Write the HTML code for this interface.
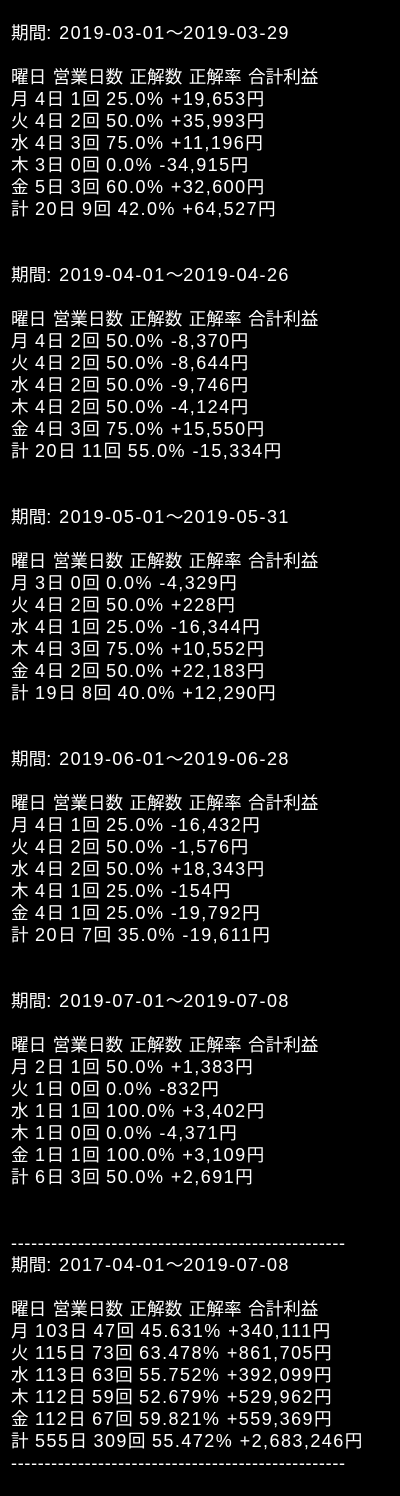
<!DOCTYPE html>
<html><head><meta charset="utf-8"><style>
html,body{margin:0;padding:0;background:#000;}
body{width:400px;height:1496px;overflow:hidden;}
pre{margin:0;padding:22px 0 0 11px;color:#fff;font-family:"Liberation Sans","Noto Sans CJK JP",sans-serif;font-size:18px;line-height:22px;letter-spacing:1.45px;white-space:pre;}
i{font-style:normal;letter-spacing:0;font-size:17.6px;}
.d{letter-spacing:0.7px;}
</style></head><body><pre><i>期間</i>: 2019-03-01<i>～</i>2019-03-29

<i>曜日</i> <i>営業日数</i> <i>正解数</i> <i>正解率</i> <i>合計利益</i>
<i>月</i> 4<i>日</i> 1<i>回</i> 25.0% +19,653<i>円</i>
<i>火</i> 4<i>日</i> 2<i>回</i> 50.0% +35,993<i>円</i>
<i>水</i> 4<i>日</i> 3<i>回</i> 75.0% +11,196<i>円</i>
<i>木</i> 3<i>日</i> 0<i>回</i> 0.0% -34,915<i>円</i>
<i>金</i> 5<i>日</i> 3<i>回</i> 60.0% +32,600<i>円</i>
<i>計</i> 20<i>日</i> 9<i>回</i> 42.0% +64,527<i>円</i>


<i>期間</i>: 2019-04-01<i>～</i>2019-04-26

<i>曜日</i> <i>営業日数</i> <i>正解数</i> <i>正解率</i> <i>合計利益</i>
<i>月</i> 4<i>日</i> 2<i>回</i> 50.0% -8,370<i>円</i>
<i>火</i> 4<i>日</i> 2<i>回</i> 50.0% -8,644<i>円</i>
<i>水</i> 4<i>日</i> 2<i>回</i> 50.0% -9,746<i>円</i>
<i>木</i> 4<i>日</i> 2<i>回</i> 50.0% -4,124<i>円</i>
<i>金</i> 4<i>日</i> 3<i>回</i> 75.0% +15,550<i>円</i>
<i>計</i> 20<i>日</i> 11<i>回</i> 55.0% -15,334<i>円</i>


<i>期間</i>: 2019-05-01<i>～</i>2019-05-31

<i>曜日</i> <i>営業日数</i> <i>正解数</i> <i>正解率</i> <i>合計利益</i>
<i>月</i> 3<i>日</i> 0<i>回</i> 0.0% -4,329<i>円</i>
<i>火</i> 4<i>日</i> 2<i>回</i> 50.0% +228<i>円</i>
<i>水</i> 4<i>日</i> 1<i>回</i> 25.0% -16,344<i>円</i>
<i>木</i> 4<i>日</i> 3<i>回</i> 75.0% +10,552<i>円</i>
<i>金</i> 4<i>日</i> 2<i>回</i> 50.0% +22,183<i>円</i>
<i>計</i> 19<i>日</i> 8<i>回</i> 40.0% +12,290<i>円</i>


<i>期間</i>: 2019-06-01<i>～</i>2019-06-28

<i>曜日</i> <i>営業日数</i> <i>正解数</i> <i>正解率</i> <i>合計利益</i>
<i>月</i> 4<i>日</i> 1<i>回</i> 25.0% -16,432<i>円</i>
<i>火</i> 4<i>日</i> 2<i>回</i> 50.0% -1,576<i>円</i>
<i>水</i> 4<i>日</i> 2<i>回</i> 50.0% +18,343<i>円</i>
<i>木</i> 4<i>日</i> 1<i>回</i> 25.0% -154<i>円</i>
<i>金</i> 4<i>日</i> 1<i>回</i> 25.0% -19,792<i>円</i>
<i>計</i> 20<i>日</i> 7<i>回</i> 35.0% -19,611<i>円</i>


<i>期間</i>: 2019-07-01<i>～</i>2019-07-08

<i>曜日</i> <i>営業日数</i> <i>正解数</i> <i>正解率</i> <i>合計利益</i>
<i>月</i> 2<i>日</i> 1<i>回</i> 50.0% +1,383<i>円</i>
<i>火</i> 1<i>日</i> 0<i>回</i> 0.0% -832<i>円</i>
<i>水</i> 1<i>日</i> 1<i>回</i> 100.0% +3,402<i>円</i>
<i>木</i> 1<i>日</i> 0<i>回</i> 0.0% -4,371<i>円</i>
<i>金</i> 1<i>日</i> 1<i>回</i> 100.0% +3,109<i>円</i>
<i>計</i> 6<i>日</i> 3<i>回</i> 50.0% +2,691<i>円</i>


<span class="d">--------------------------------------------------</span>
<i>期間</i>: 2017-04-01<i>～</i>2019-07-08

<i>曜日</i> <i>営業日数</i> <i>正解数</i> <i>正解率</i> <i>合計利益</i>
<i>月</i> 103<i>日</i> 47<i>回</i> 45.631% +340,111<i>円</i>
<i>火</i> 115<i>日</i> 73<i>回</i> 63.478% +861,705<i>円</i>
<i>水</i> 113<i>日</i> 63<i>回</i> 55.752% +392,099<i>円</i>
<i>木</i> 112<i>日</i> 59<i>回</i> 52.679% +529,962<i>円</i>
<i>金</i> 112<i>日</i> 67<i>回</i> 59.821% +559,369<i>円</i>
<i>計</i> 555<i>日</i> 309<i>回</i> 55.472% +2,683,246<i>円</i>
<span class="d">--------------------------------------------------</span></pre></body></html>
